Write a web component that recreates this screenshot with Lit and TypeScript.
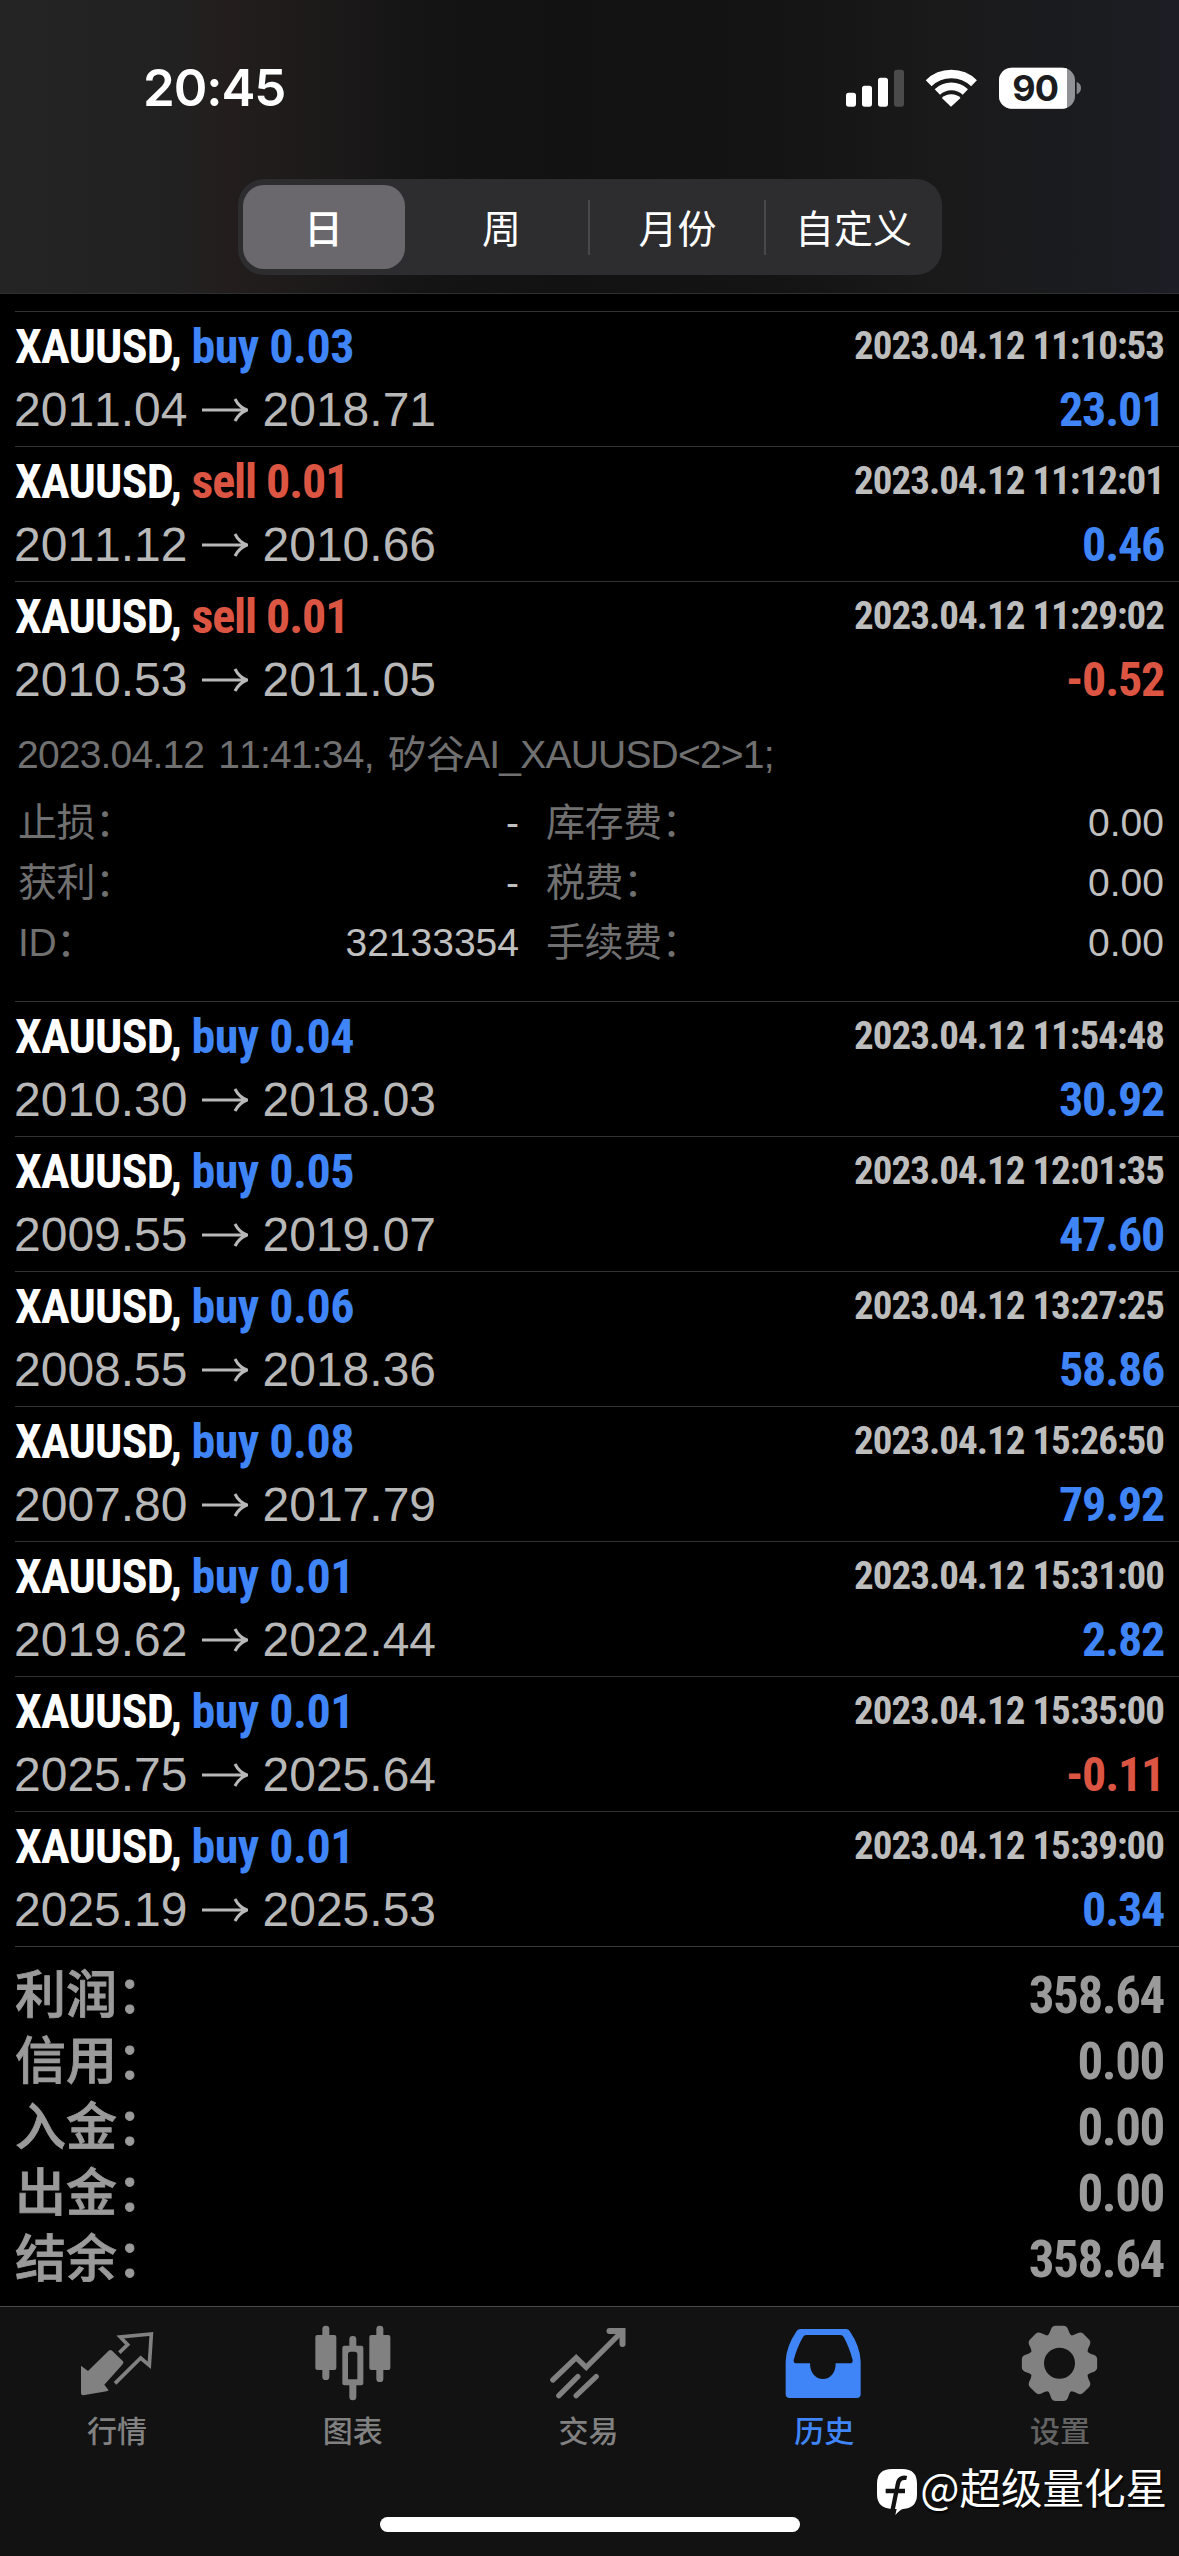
import { LitElement, html, svg, css, nothing } from "lit";
import { customElement, property } from "lit/decorators.js";
import { classMap } from "lit/directives/class-map.js";

interface Detail {
  note: string;
  rows: [string, string, string, string][];
}
interface Deal {
  side: "buy" | "sell";
  volume: string;
  open: string;
  close: string;
  time: string;
  profit: string;
  detail?: Detail;
}

const deals: Deal[] = [
  { side: "buy", volume: "0.03", open: "2011.04", close: "2018.71", time: "2023.04.12 11:10:53", profit: "23.01" },
  { side: "sell", volume: "0.01", open: "2011.12", close: "2010.66", time: "2023.04.12 11:12:01", profit: "0.46" },
  {
    side: "sell", volume: "0.01", open: "2010.53", close: "2011.05", time: "2023.04.12 11:29:02", profit: "-0.52",
    detail: {
      note: "2023.04.12 11:41:34, 矽谷AI_XAUUSD<2>1;",
      rows: [
        ["止损：", "-", "库存费：", "0.00"],
        ["获利：", "-", "税费：", "0.00"],
        ["ID：", "32133354", "手续费：", "0.00"],
      ],
    },
  },
  { side: "buy", volume: "0.04", open: "2010.30", close: "2018.03", time: "2023.04.12 11:54:48", profit: "30.92" },
  { side: "buy", volume: "0.05", open: "2009.55", close: "2019.07", time: "2023.04.12 12:01:35", profit: "47.60" },
  { side: "buy", volume: "0.06", open: "2008.55", close: "2018.36", time: "2023.04.12 13:27:25", profit: "58.86" },
  { side: "buy", volume: "0.08", open: "2007.80", close: "2017.79", time: "2023.04.12 15:26:50", profit: "79.92" },
  { side: "buy", volume: "0.01", open: "2019.62", close: "2022.44", time: "2023.04.12 15:31:00", profit: "2.82" },
  { side: "buy", volume: "0.01", open: "2025.75", close: "2025.64", time: "2023.04.12 15:35:00", profit: "-0.11" },
  { side: "buy", volume: "0.01", open: "2025.19", close: "2025.53", time: "2023.04.12 15:39:00", profit: "0.34" },
];

const totals: [string, string][] = [
  ["利润：", "358.64"],
  ["信用：", "0.00"],
  ["入金：", "0.00"],
  ["出金：", "0.00"],
  ["结余：", "358.64"],
];

@customElement("deal-row")
export class DealRow extends LitElement {
  @property({ attribute: false }) deal!: Deal;

  static styles = css`
    :host {
      display: block;
      box-sizing: border-box;
      height: 135px;
      margin-left: 15px;
      padding: 4px 15px 0 0;
      border-top: 1px solid #323232;
      font-family: "Liberation Sans", "Noto Sans CJK SC", sans-serif;
      font-kerning: none;
    }
    :host([expanded]) { height: 420px; }
    .line {
      display: flex;
      justify-content: space-between;
      align-items: flex-start;
      height: 62px;
      line-height: 62px;
      font-size: 48px;
      white-space: pre;
    }
    .line.second { line-height: 64px; }
    .title, .time, .profit {
      font-family: "Roboto Condensed", "Liberation Sans", sans-serif;
      font-weight: 700;
      letter-spacing: -0.8px;
      font-kerning: normal;
    }
    .buy { letter-spacing: -0.5px; }
    .sell { letter-spacing: -1.1px; }
    .time { font-size: 39px; line-height: 60px; color: #bdbdbd; letter-spacing: -1px; }
    .profit { letter-spacing: -1.2px; }
    .up { color: #3f85f7; }
    .down { color: #dc5543; }
    .prices { display: flex; align-items: center; color: #b8b8b8; margin-left: -1px; }
    .arrow { width: 46px; height: 26px; margin: 0 15px 0 14px; }
    .detail { padding-top: 15px; font-size: 39px; line-height: 60px; color: #707070; }
    .note { margin-left: 2px; height: 60px; white-space: pre; letter-spacing: -0.8px; word-spacing: 4px; }
    .grid {
      display: grid;
      grid-template-columns: 501px 1fr;
      column-gap: 27px;
      margin: 8px 0 0 3px;
    }
    .cell { display: flex; justify-content: space-between; height: 60px; }
    .label { letter-spacing: -0.4px; }
    .value { color: #c0c0c0; }
  `;

  render() {
    const d = this.deal;
    const tone = (down: boolean) => classMap({ up: !down, down });
    const buy = d.side === "buy";
    const side = classMap({ up: buy, buy, down: !buy, sell: !buy });
    return html`
      <div class="line">
        <div class="title">XAUUSD, <span class=${side}>${d.side} ${d.volume}</span></div>
        <div class="time">${d.time}</div>
      </div>
      <div class="line second">
        <div class="prices">
          <span>${d.open}</span>
          <svg class="arrow" viewBox="0 0 46 26" fill="none" stroke="currentColor" stroke-width="3">
            <path d="M0 13H44M33 2Q37 10 45 13Q37 16 33 24" />
          </svg>
          <span>${d.close}</span>
        </div>
        <div class="profit"><span class=${tone(d.profit.startsWith("-"))}>${d.profit}</span></div>
      </div>
      ${d.detail
        ? html`<div class="detail">
            <div class="note">${d.detail.note}</div>
            <div class="grid">
              ${d.detail.rows.map(
                ([a, b, c, e]) => html`
                  <div class="cell"><span class="label">${a}</span><span class="value">${b}</span></div>
                  <div class="cell"><span class="label">${c}</span><span class="value">${e}</span></div>
                `
              )}
            </div>
          </div>`
        : nothing}
    `;
  }
}

const gearTeeth = [0, 45, 90, 135, 180, 225, 270, 315];

const tabs = [
  {
    label: "行情",
    box: "54 60 240 240",
    icon: svg`
      <path fill="currentColor" d="M63 197L84 213L146 152Q152 148 157 153L189 184Q192 189 188 193L133 254L146 271Q144 273 140 274L70 286Q63 286 63 279Z"/>
      <path fill="none" stroke="currentColor" stroke-width="11" d="M178 158L203 134L181 111L274 102L268 196L242 174L165 250"/>`,
  },
  {
    label: "图表",
    box: "761 60 240 240",
    icon: svg`<g fill="currentColor">
      <rect x="765" y="105" width="63" height="105" rx="6"/><rect x="786" y="77" width="21" height="163" rx="10"/>
      <rect x="927" y="105" width="63" height="105" rx="6"/><rect x="948" y="77" width="21" height="169" rx="10"/>
      <path d="M877.500 108a10 10 0 0 1 10.500 10V137H903a6 6 0 0 1 6 6V250a6 6 0 0 1-6 6H888V290a10.500 10.500 0 0 1-21 0V256H852a6 6 0 0 1-6-6V143a6 6 0 0 1 6-6H867V118a10 10 0 0 1 10.500-10ZM871 155a8 8 0 0 0-8 8V238H891V163a8 8 0 0 0-8-8Z" fill-rule="evenodd"/></g>`,
  },
  {
    label: "交易",
    box: "58.5 60 240 240",
    icon: svg`<g fill="none" stroke="currentColor" stroke-width="16" stroke-linecap="round">
      <path d="M70 240L140 173L170 202L272 100"/><path d="M88 287L145 230"/><path d="M140 287L200 230"/>
      <path stroke-width="18" d="M240 93H279V132"/></g>`,
  },
  {
    label: "历史",
    box: "766 60 240 240",
    active: true,
    icon: svg`<path fill="currentColor" fill-rule="evenodd" d="M812 87H950Q956 87 960 93Q992 140 993 185V282Q993 294 981 294H780Q768 294 768 282V185Q769 140 801 93Q805 87 812 87ZM830 105Q823 105 820 111Q803 140 792 180Q791 189 798 190H841C841 220 858 237 880 237S918 220 918 190H963Q970 189 969 180Q958 140 942 111Q939 105 932 105Z"/>`,
  },
  {
    label: "设置",
    dim: true,
    box: "573 30 240 240",
    icon: svg`<g transform="translate(688.500 160)">
      <circle r="68" fill="none" stroke="currentColor" stroke-width="43"/>
      ${gearTeeth.map(
        (a) => svg`<path transform="rotate(${a})" fill="currentColor" d="M-42 -78Q-32 -84 -29 -93L-25 -104Q-21 -113 -12 -113H12Q21 -113 25 -104L29 -93Q32 -84 42 -78Z"/>`
      )}</g>`,
  },
];

@customElement("app-root")
export class AppRoot extends LitElement {
  static styles = css`
    :host {
      display: flex;
      flex-direction: column;
      position: relative;
      box-sizing: border-box;
      width: 1179px;
      height: 2556px;
      overflow: hidden;
      background: #000;
      color: #fff;
      font-family: "Liberation Sans", "Noto Sans CJK SC", sans-serif;
    }
    .header {
      box-sizing: border-box;
      height: 294px;
      border-bottom: 1px solid #303032;
      background: linear-gradient(90deg, #242424 0, #222121 180px, #231e1d 225px, #1d1a1a 310px, #141414 430px, #121212 560px, #141414 780px, #1a1a1b 950px, #1b1c20 1100px, #1d1e25 1179px);
    }
    .status {
      display: flex;
      justify-content: space-between;
      align-items: center;
      height: 179px;
      box-sizing: border-box;
      padding: 0 97px 3px 143px;
    }
    .clock { font: 600 51px/60px Inter, sans-serif; letter-spacing: -1.1px; }
    .signals { width: 236px; height: 44px; }
    .battery { font: 700 108px Inter, sans-serif; letter-spacing: -2px; }
    .segments {
      display: grid;
      grid-template-columns: repeat(4, 1fr);
      grid-template-rows: 96px;
      width: 704px;
      height: 96px;
      margin: 0 auto;
      border-radius: 26px;
      background: #2d2c2f;
      font: 39px/56px "Noto Sans CJK SC", sans-serif;
    }
    .segment { display: flex; align-items: center; justify-content: center; padding-bottom: 3px; }
    .segment.ruled { background: linear-gradient(#48484b, #48484b) right center / 2px 55px no-repeat; }
    .segment.on {
      margin: 6px 9px 6px 5px;
      border-radius: 21px;
      background: #6b686d;
      font-weight: 500;
    }
    .history { display: flex; flex-direction: column; height: 2012px; padding-top: 17px; box-sizing: border-box; }
    .totals {
      margin-left: 15px;
      padding: 16px 15px 0 0;
      border-top: 1px solid #3a3a3a;
      font: 700 51px/66px "Roboto Condensed", "Noto Sans CJK SC", sans-serif;
      color: #9a9a9a;
    }
    .total { display: flex; justify-content: space-between; height: 66px; }
    .total-label { font-weight: 500; -webkit-text-stroke: 0.8px currentColor; }
    .total-value { letter-spacing: -1.4px; }
    .tabbar {
      display: flex;
      flex-direction: column;
      align-items: center;
      flex: 1;
      border-top: 1px solid #4c4c4c;
      background: #121212;
    }
    .tabs { display: grid; grid-template-columns: repeat(5, 1fr); width: 100%; height: 210px; }
    .tab {
      display: flex;
      flex-direction: column;
      align-items: center;
      padding-top: 13px;
      color: #818181;
      font: 500 30px/44px "Noto Sans CJK SC", sans-serif;
    }
    .tab.active { color: #3f85f7; }
    .tab-icon { width: 80px; height: 80px; overflow: visible; margin-bottom: 7px; }
    .tab-label { margin-right: 2px; }
    .tab.dim .tab-label { color: #636363; }
    .home { width: 420px; height: 15px; border-radius: 8px; background: #fff; }
    .credit {
      position: absolute;
      right: 12px;
      bottom: 39px;
      display: flex;
      align-items: center;
      font: 41.5px/62px "Noto Sans CJK SC", sans-serif;
      text-shadow: 1px 2px 2px #000;
    }
    .credit-icon { width: 42px; height: 48px; margin: 11px 2px 0 0; }
  `;

  render() {
    return html`
      <header class="header">
        <div class="status">
          <div class="clock">20:45</div>
          <svg class="signals" viewBox="48 46 708 132">
            <g fill="#fff">
              <rect x="48" y="126" width="30" height="42" rx="8" />
              <rect x="96" y="105" width="30" height="63" rx="8" />
              <rect x="144" y="81" width="30" height="87" rx="8" />
              <rect x="192" y="57" width="30" height="111" rx="8" fill="#4b4b4b" />
              <path d="M363 168L335.500 142Q347 131 364 131T391.500 142Z" />
            </g>
            <g fill="none" stroke="#fff">
              <path stroke-width="25" d="M296 97.500A98 98 0 0 1 432 97.500" />
              <path stroke-width="23" d="M322 124A61 61 0 0 1 406 124" />
            </g>
            <clipPath id="charge"><rect x="507" y="40" width="204" height="140" /></clipPath>
            <rect x="507" y="51" width="228" height="123" rx="38" fill="#909296" />
            <rect x="507" y="51" width="228" height="123" rx="38" fill="#fff" clip-path="url(#charge)" />
            <path d="M740 93Q753 99 753 112T740 131Z" fill="#85878a" />
            <text class="battery" x="616" y="152" text-anchor="middle" fill="#1c1c1e">90</text>
          </svg>
        </div>
        <nav class="segments">
          <div class="segment on">日</div>
          <div class="segment ruled">周</div>
          <div class="segment ruled">月份</div>
          <div class="segment">自定义</div>
        </nav>
      </header>
      <main class="history">
        ${deals.map((d) => html`<deal-row .deal=${d} ?expanded=${!!d.detail}></deal-row>`)}
        <section class="totals">
          ${totals.map(
            ([label, value]) => html`<div class="total">
              <span class="total-label">${label}</span><span class="total-value">${value}</span>
            </div>`
          )}
        </section>
      </main>
      <footer class="tabbar">
        <div class="tabs">
          ${tabs.map(
            (t) => html`<div class=${classMap({ tab: true, active: !!t.active, dim: !!t.dim })}>
              <svg class="tab-icon" viewBox=${t.box}>${t.icon}</svg>
              <span class="tab-label">${t.label}</span>
            </div>`
          )}
        </div>
        <div class="home"></div>
      </footer>
      <div class="credit">
        <svg class="credit-icon" viewBox="137 477 126 144">
          <path fill="#fff" d="M185 480H216Q260 480 260 524V556Q260 598 218 600Q210 601 195 618L199 600H185Q140 598 140 556V524Q140 480 185 480Z" />
          <path fill="none" stroke="#121212" stroke-width="13" d="M229 507Q205 502 202 528L187 602M166 546H224" />
        </svg>
        <span>@超级量化星</span>
      </div>
    `;
  }
}
